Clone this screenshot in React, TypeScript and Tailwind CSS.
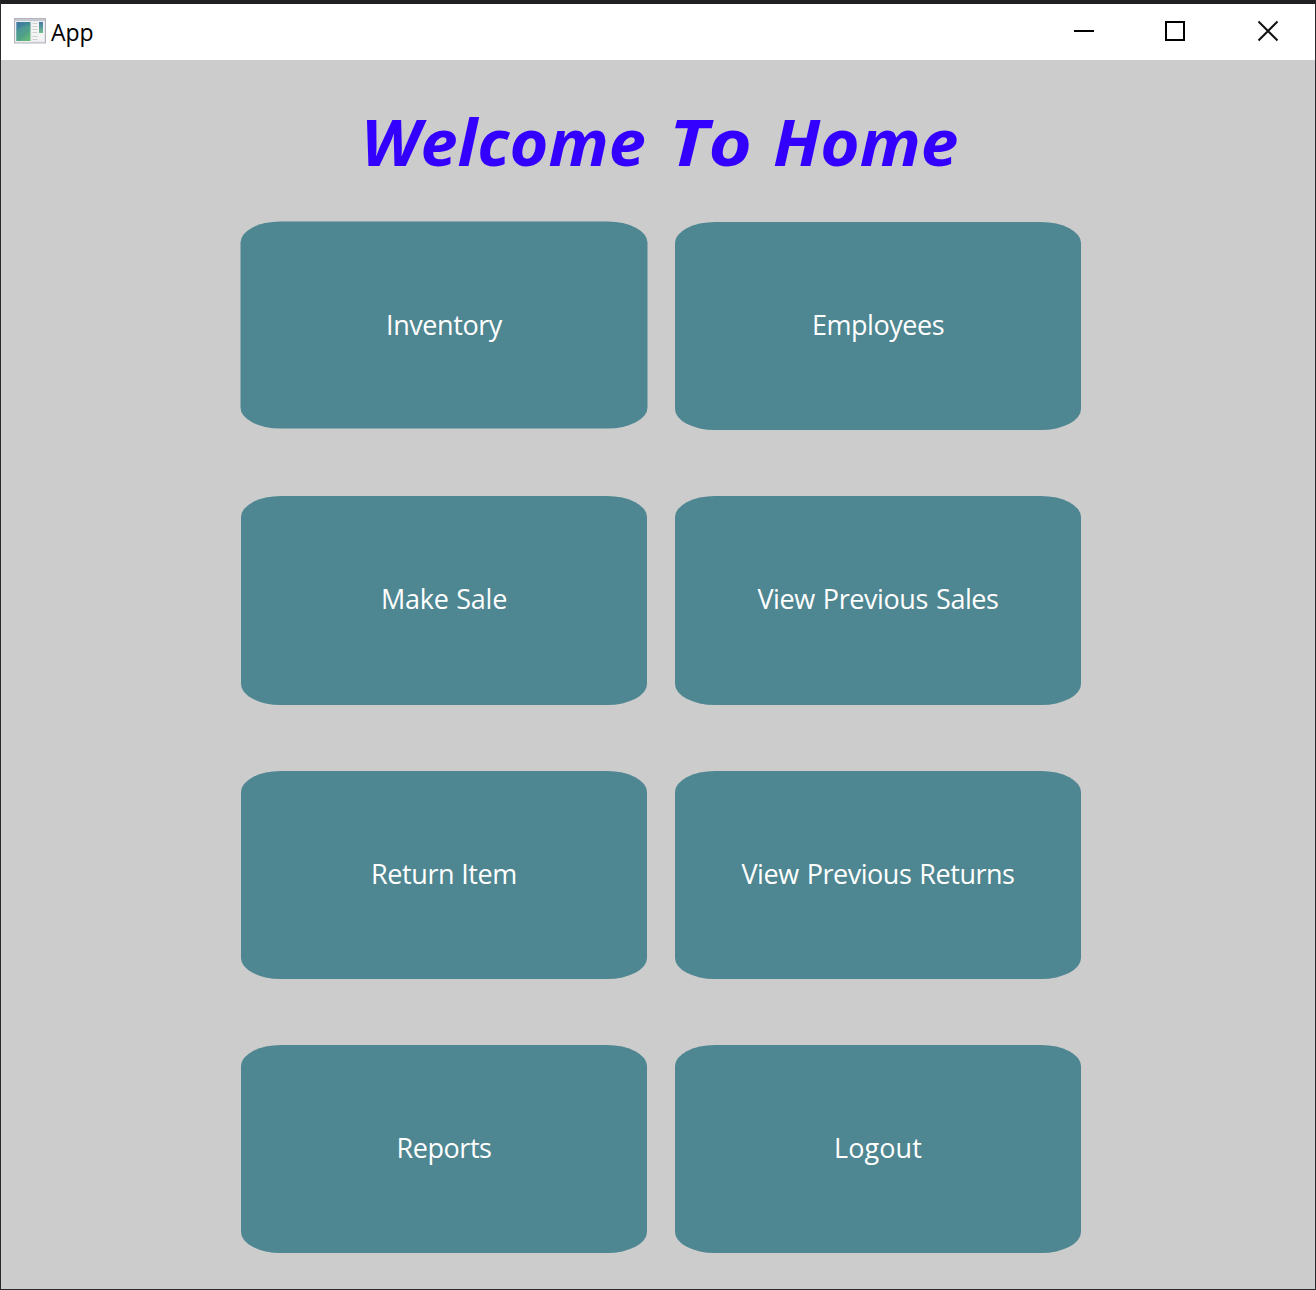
import React from "react";

type Tile = { label: string; size: string; text: string };

const tiles: Tile[] = [
  { label: "Inventory", size: "h-[207px] w-[407px] mt-[2px] -translate-x-[0.5px] -translate-y-[0.5px]", text: "tracking-[-0.42px]" },
  { label: "Employees", size: "h-[208px] w-[406px] mt-[2px] pb-[2px]", text: "tracking-[-0.45px]" },
  { label: "Make Sale", size: "h-[209px] w-[406px] mt-[1px] pb-[2px]", text: "tracking-[-0.25px] [word-spacing:1px]" },
  { label: "View Previous Sales", size: "h-[209px] w-[406px] mt-[1px] pb-[2px]", text: "tracking-[-0.42px] [word-spacing:1.5px]" },
  { label: "Return Item", size: "h-[208px] w-[406px] mt-[1px] pb-[2px]", text: "tracking-[-0.42px] [word-spacing:0.5px]" },
  { label: "View Previous Returns", size: "h-[208px] w-[406px] mt-[1px] pb-[2px]", text: "tracking-[-0.47px] [word-spacing:1.5px]" },
  { label: "Reports", size: "h-[208px] w-[406px] pb-[2px]", text: "tracking-[-0.45px]" },
  { label: "Logout", size: "h-[208px] w-[406px] pb-[2px]", text: "tracking-[0.1px]" },
];

function AppIcon() {
  return (
    <svg width="32" height="26" viewBox="0 0 32 26" aria-hidden="true">
      <defs>
        <linearGradient id="pane" x1="0" y1="0" x2="0.6" y2="1">
          <stop offset="0" stopColor="#3f76a8" />
          <stop offset="0.5" stopColor="#418f91" />
          <stop offset="1" stopColor="#62b67a" />
        </linearGradient>
        <linearGradient id="bar" x1="0" y1="0" x2="0" y2="1">
          <stop offset="0" stopColor="#4577a8" />
          <stop offset="1" stopColor="#6fc08a" />
        </linearGradient>
      </defs>
      <rect x="0.5" y="0.5" width="31" height="24.5" fill="#e4e5e8" stroke="#b2b4b9" />
      <path d="M1 2h30" stroke="#c4c8d2" strokeWidth="2" />
      <rect x="1.5" y="3.5" width="16" height="20" fill="#f7f7f7" />
      <rect x="2.3" y="4" width="14.2" height="19" fill="url(#pane)" />
      <path d="M2.3 12C8 8 12 7 16.5 7v4C11 13 6 17 2.3 22z" fill="#65b494" opacity="0.3" />
      <rect x="18" y="3.5" width="12" height="19.5" fill="#f4f4f5" />
      <path d="M18.5 5.5h5M18.5 8.5h5M18.5 11.5h5M18.5 14.5h5M18.5 18.5h5M18.5 21.5h5" stroke="#cfcfd1" />
      <rect x="25" y="4" width="4" height="11" fill="url(#bar)" />
    </svg>
  );
}

function TitleBar() {
  return (
    <header className="flex h-14 shrink-0 items-start bg-white">
      <div className="ml-[13px] mt-[14px]">
        <AppIcon />
      </div>
      <span className="ml-[5px] mt-[12px] text-[23px] leading-8 text-black">App</span>
      <div className="mr-[36px] mt-[16px] ml-auto flex items-center">
        <svg width="22" height="22" viewBox="0 0 22 22" className="mr-[69px]" aria-label="Minimize">
          <path d="M1 11h20" stroke="#000" strokeWidth="2" />
        </svg>
        <svg width="22" height="22" viewBox="0 0 22 22" className="mr-[71px]" aria-label="Maximize">
          <rect x="2" y="2" width="18" height="18" fill="none" stroke="#000" strokeWidth="2" />
        </svg>
        <svg width="22" height="22" viewBox="0 0 22 22" aria-label="Close">
          <path d="M1.5 1.5l19 19M20.5 1.5l-19 19" stroke="#111" strokeWidth="2" />
        </svg>
      </div>
    </header>
  );
}

export default function App() {
  return (
    <div className="flex h-[1290px] w-[1316px] flex-col border border-t-4 border-[#29292c] border-t-[#202022] bg-[#cccccc] font-['Open_Sans','Noto_Sans',sans-serif]">
      <TitleBar />
      <main className="flex flex-col items-start">
        <h1 className="ml-[360px] mt-[38px] flex h-[88px] items-center whitespace-nowrap text-[64px] font-bold italic leading-[88px] text-[#3300ff]">
          <span className="w-[308px] origin-left scale-x-[1.04]">Welcome</span>
          <span className="w-[104px] origin-left scale-x-[1.16]">To</span>
          <span className="origin-left scale-x-[1.055]">Home</span>
        </h1>
        <div className="ml-[240px] mt-[34px] grid grid-cols-[406px_406px] grid-rows-[275px_275px_275px_208px] gap-x-7">
          {tiles.map((tile) => (
            <button
              key={tile.label}
              className={`${tile.size} flex items-center justify-center rounded-[40px/21px] bg-[#4e8691] text-[27px] font-[370] whitespace-nowrap text-white`}
            >
              <span className={tile.text}>{tile.label}</span>
            </button>
          ))}
        </div>
      </main>
    </div>
  );
}
